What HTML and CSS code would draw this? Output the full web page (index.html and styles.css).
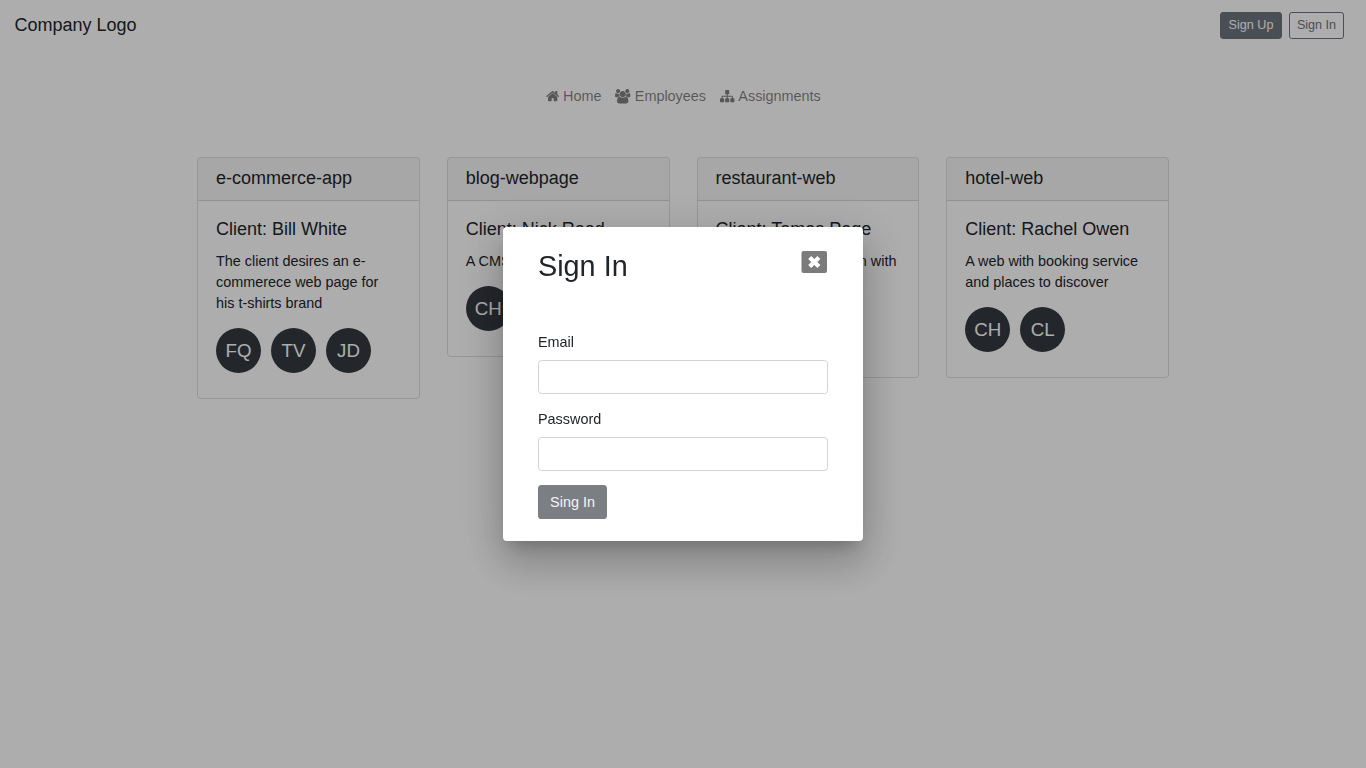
FILE: index.html
```html
<!DOCTYPE html>
<html lang="en">
<head>
<meta charset="utf-8">
<title>Projects</title>
<link rel="stylesheet" href="styles.css">
</head>
<body>
<header class="navbar">
  <a class="brand">Company Logo</a>
  <div class="actions">
    <button class="btn-sm solid">Sign Up</button>
    <button class="btn-sm outline">Sign In</button>
  </div>
</header>
<nav class="menu">
  <a class="link"><svg class="icon-home" viewBox="64 0 1664 1792"><path d="M1472 992v480q0 26-19 45t-45 19h-384v-384h-256v384h-384q-26 0-45-19t-19-45v-480q0-1 .5-3t.5-3l575-474 575 474q1 2 1 6zm223-69l-62 74q-8 9-21 11h-3q-13 0-21-7l-692-577-692 577q-12 8-24 7-13-2-21-11l-62-74q-8-10-7-23.5t11-21.5l719-599q32-26 76-26t76 26l244 204v-195q0-14 9-23t23-9h192q14 0 23 9t9 23v408l219 182q10 8 11 21.5t-7 23.5z"/></svg><span>Home</span></a>
  <a class="link"><svg class="icon-users" viewBox="-64 0 1920 1792"><path d="M529 896q-162 5-265 128h-134q-82 0-138-40.5t-56-118.5q0-353 124-353 6 0 43.500 21t97.500 42.500 119 21.500q67 0 133-23-5 37-5 66 0 139 81 256zm1071 637q0 120-73 189.500t-194 69.500h-874q-121 0-194-69.500t-73-189.500q0-53 3.500-103.500t14-109 26.500-108.500 43-97.500 62-81 85.500-53.500 111.500-20q10 0 43 21.500t73 48 107 48 135 21.500 135-21.500 107-48 73-48 43-21.500q61 0 111.500 20t85.500 53.500 62 81 43 97.500 26.500 108.500 14 109 3.500 103.500zm-1024-1277q0 106-75 181t-181 75-181-75-75-181 75-181 181-75 181 75 75 181zm704 384q0 159-112.500 271.500t-271.500 112.500-271.500-112.500-112.500-271.500 112.500-271.500 271.500-112.500 271.500 112.500 112.500 271.500zm576 225q0 78-56 118.500t-138 40.500h-134q-103-123-265-128 81-117 81-256 0-29-5-66 66 23 133 23 59 0 119-21.500t97.500-42.500 43.500-21q124 0 124 353zm-128-609q0 106-75 181t-181 75-181-75-75-181 75-181 181-75 181 75 75 181z"/></svg><span>Employees</span></a>
  <a class="link"><svg class="icon-sitemap" viewBox="0 0 1792 1792"><path d="M1792 1248v320q0 40-28 68t-68 28h-320q-40 0-68-28t-28-68v-320q0-40 28-68t68-28h96v-192h-512v192h96q40 0 68 28t28 68v320q0 40-28 68t-68 28h-320q-40 0-68-28t-28-68v-320q0-40 28-68t68-28h96v-192h-512v192h96q40 0 68 28t28 68v320q0 40-28 68t-68 28h-320q-40 0-68-28t-28-68v-320q0-40 28-68t68-28h96v-192q0-52 38-90t90-38h512v-192h-96q-40 0-68-28t-28-68v-320q0-40 28-68t68-28h320q40 0 68 28t28 68v320q0 40-28 68t-68 28h-96v192h512q52 0 90 38t38 90v192h96q40 0 68 28t28 68z"/></svg><span>Assignments</span></a>
</nav>
<main class="cards">
  <article class="card">
    <h5 class="card-header">e-commerce-app</h5>
    <div class="card-body">
      <h5 class="client">Client: Bill White</h5>
      <p class="text">The client desires an e-commerece web page for his t-shirts brand</p>
      <div class="team"><span class="avatar">FQ</span><span class="avatar">TV</span><span class="avatar">JD</span></div>
    </div>
  </article>
  <article class="card">
    <h5 class="card-header">blog-webpage</h5>
    <div class="card-body">
      <h5 class="client">Client: Nick Reed</h5>
      <p class="text">A CMS blog</p>
      <div class="team"><span class="avatar">CH</span></div>
    </div>
  </article>
  <article class="card">
    <h5 class="card-header">restaurant-web</h5>
    <div class="card-body">
      <h5 class="client">Client: Tomas Page</h5>
      <p class="text snug">A menu web application with bookings</p>
      <div class="team"><span class="avatar">TV</span></div>
    </div>
  </article>
  <article class="card">
    <h5 class="card-header">hotel-web</h5>
    <div class="card-body">
      <h5 class="client">Client: Rachel Owen</h5>
      <p class="text">A web with booking service and places to discover</p>
      <div class="team"><span class="avatar">CH</span><span class="avatar">CL</span></div>
    </div>
  </article>
</main>
<div class="overlay">
  <section class="dialog" role="dialog">
    <div class="dialog-head">
      <h2 class="dialog-title">Sign In</h2>
      <svg class="close" viewBox="0 0 26 22"><rect x=".5" width="25.500" height="22" rx="2" fill="#7b7b7b"/><path d="M8.700 6.400l9.200 9.200M17.900 6.400l-9.200 9.200" stroke="#fff" stroke-width="4.200"/></svg>
    </div>
    <form class="form">
      <label class="label" for="email">Email</label>
      <input class="input" id="email" type="email">
      <label class="label" for="password">Password</label>
      <input class="input" id="password" type="password">
      <button class="submit" type="button">Sing In</button>
    </form>
  </section>
</div>
</body>
</html>
```
FILE: styles.css
```css
* { box-sizing: border-box; }
body {
  margin: 0;
  background: #fff;
  color: #212529;
  font: 14.4px/21px "Liberation Sans", Arial, sans-serif;
}
h2, h5, p { margin: 0; font-weight: 400; }
button, input { font-family: inherit; }

.navbar {
  display: flex;
  align-items: center;
  justify-content: space-between;
  height: 51px;
  padding: 0 22px 0 14.4px;
}
.brand { font-size: 18px; line-height: 27px; padding-bottom: 1px; }
.actions { display: flex; gap: 7px; }
.btn-sm {
  height: 27px;
  padding: 0 0 2px;
  border: 1px solid #6c757d;
  border-radius: 2.9px;
  font-size: 12.6px;
  line-height: 18px;
  white-space: nowrap;
}
.solid { background: #6c757d; color: #fff; width: 62px; }
.outline { background: transparent; color: #6c757d; width: 55px; }

.menu {
  display: flex;
  justify-content: center;
  gap: 14.2px;
  padding: 35px 0 0 .6px;
  color: rgba(0, 0, 0, .5);
}
.link { display: flex; align-items: center; gap: 3.8px; }
.link svg { height: 14.4px; fill: currentColor; }
.icon-home { width: 13.37px; }
.icon-users { width: 15.43px; margin: 0 .4px 0 -.4px; }
.icon-sitemap { width: 14.4px; }

.cards {
  display: grid;
  grid-template-columns: repeat(4, 222.75px);
  gap: 27px;
  justify-content: center;
  align-items: start;
  padding-top: 49.8px;
}
.card { border: 1px solid rgba(0, 0, 0, .125); border-radius: 3.6px; }
.card-header {
  padding: 10px 18px 11.6px;
  font-size: 18px;
  line-height: 21px;
  background: rgba(0, 0, 0, .03);
  border-bottom: 1px solid rgba(0, 0, 0, .125);
}
.card-body { padding: 18px 18px 25px; }
.client { font-size: 18px; line-height: 21px; margin-bottom: 10.8px; white-space: nowrap; }
.text { margin-bottom: 13.6px; }
.snug { text-indent: -.7px; }
.team { display: flex; gap: 10px; }
.avatar {
  width: 45px;
  height: 45px;
  border-radius: 50%;
  background: #343a40;
  color: #fff;
  font-size: 18.7px;
  line-height: 45px;
  text-align: center;
}

.overlay {
  position: fixed;
  inset: 0;
  display: flex;
  align-items: center;
  justify-content: center;
  background: rgba(0, 0, 0, .32);
}
.dialog {
  width: 360px;
  height: 314px;
  padding: 22px 35px;
  border-radius: 4px;
  background: #fff;
  box-shadow: 0 11px 15px -7px rgba(0, 0, 0, .2), 0 24px 38px 3px rgba(0, 0, 0, .14), 0 9px 46px 8px rgba(0, 0, 0, .12);
}
.dialog-head { display: flex; justify-content: space-between; align-items: flex-start; height: 83px; }
.dialog-title { font-size: 28.8px; line-height: 34px; }
.close { width: 26px; height: 22px; margin: 2px 1px 0 0; }
.form { display: flex; flex-direction: column; align-items: flex-start; }
.label { margin-bottom: 7px; }
.input {
  width: 100%;
  height: 34px;
  margin-bottom: 15px;
  padding: 5px 11px;
  border: 1px solid #ced4da;
  border-radius: 3.6px;
  font-size: 14.4px;
}
.submit {
  width: 69px;
  height: 34px;
  margin-top: -1px;
  padding: 0;
  border: 0;
  border-radius: 3.6px;
  background: #7b7f83;
  color: #f5f5f5;
  font-size: 14.4px;
}
```
